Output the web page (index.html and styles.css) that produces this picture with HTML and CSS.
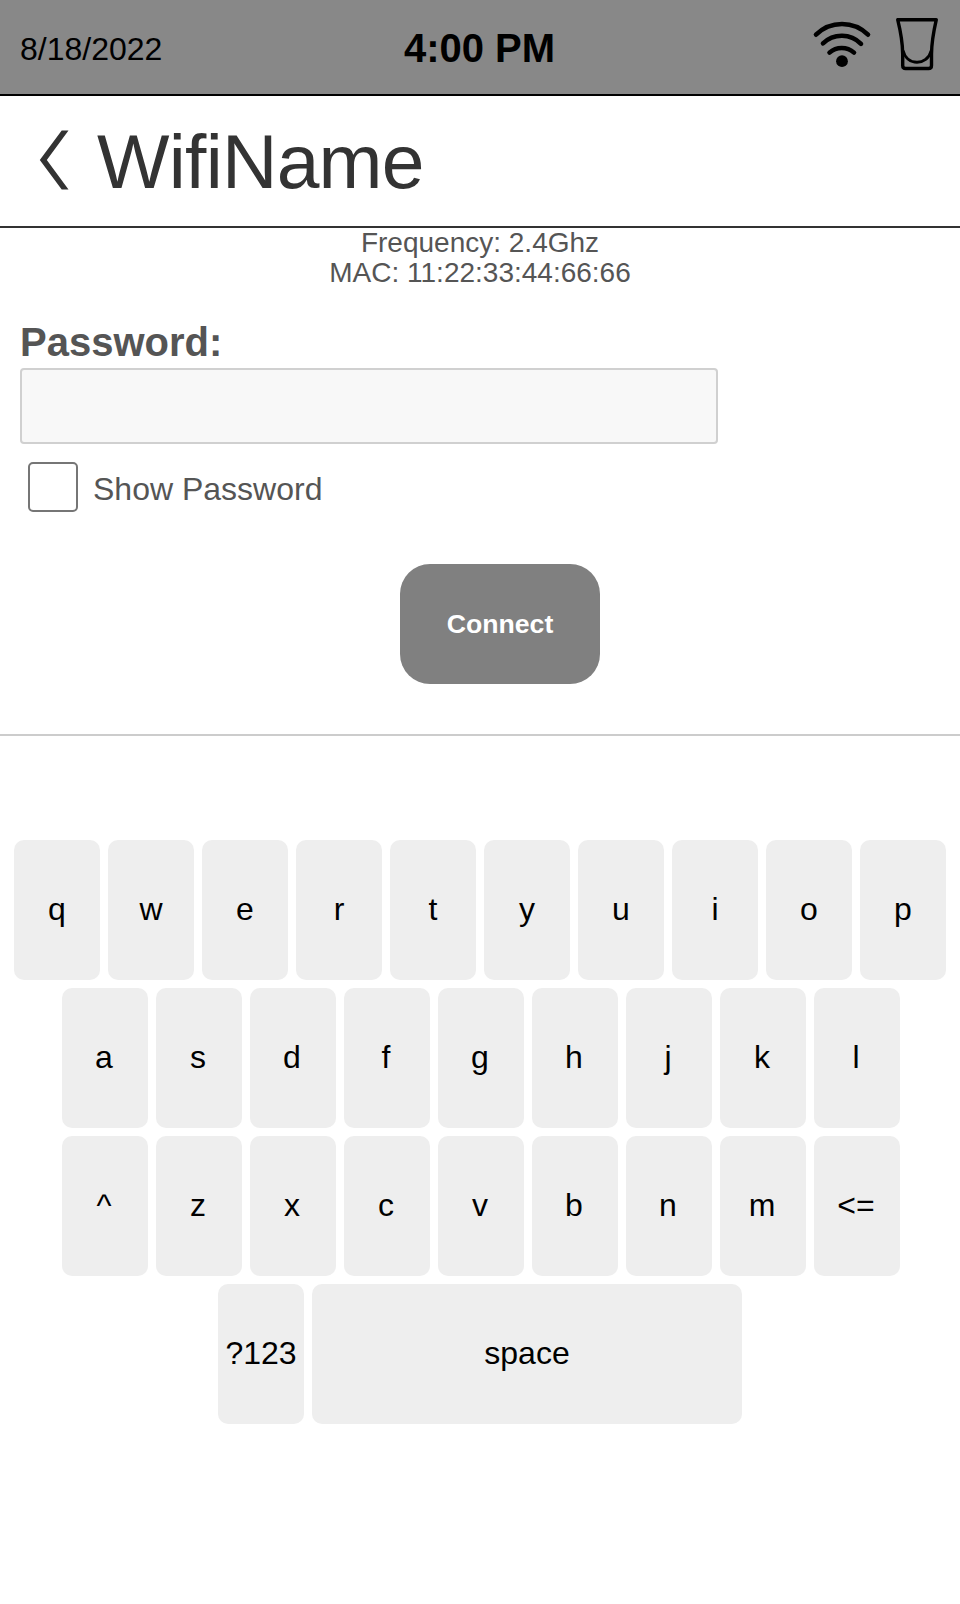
FILE: index.html
```html
<!DOCTYPE html>
<html lang="en">
<head>
<meta charset="utf-8">
<title>WifiName</title>
<link rel="stylesheet" href="styles.css">
</head>
<body>
<header class="status-bar">
  <div class="date">8/18/2022</div>
  <div class="time">4:00 PM</div>
  <div class="status-icons">
    <svg class="wifi" width="60" height="52" viewBox="812 18 60 52" fill="none" stroke="#000" stroke-width="4.6" stroke-linecap="round">
      <path d="M816 35.7A37 37 0 0 1 868 35.7"/>
      <path d="M823 44.4A27 27 0 0 1 861 44.8"/>
      <path d="M829.5 53.6A18.5 18.5 0 0 1 854 53.6"/>
      <circle cx="842" cy="62.2" r="5.9" fill="#000" stroke="none"/>
    </svg>
    <svg class="glass" width="44" height="54" viewBox="895 17 44 54" fill="none" stroke="#000" stroke-width="3.4" stroke-linejoin="round">
      <path d="M897.7 19.7H936.3C933.5 32 931.6 44 931.5 54V65.5Q931.5 68.5 928.5 68.5H905.7Q902.7 68.5 902.7 65.5V54C902.6 44 900.7 32 897.7 19.7Z"/>
      <path stroke-width="3" d="M903 50.5C905 58.5 911 62.2 917 62.2S929.3 58.5 931.3 50.5"/>
    </svg>
  </div>
</header>
<div class="title-bar">
  <svg class="back" width="30" height="60" viewBox="39 130 30 60" fill="#333"><path d="M61.7 130.4H68.5L46.8 160 68.5 189.6H61.7L39.8 160Z"/></svg>
  <h1 class="title">WifiName</h1>
</div>
<main class="network">
  <div class="info">Frequency: 2.4Ghz<br>MAC: 11:22:33:44:66:66</div>
  <label class="password-label" for="password">Password:</label>
  <input class="password-input" id="password" type="password">
  <label class="show-password"><input class="checkbox" type="checkbox"><span>Show Password</span></label>
  <button class="connect">Connect</button>
</main>
<section class="keyboard">
  <div class="row">
    <button class="key">q</button><button class="key">w</button><button class="key">e</button><button class="key">r</button><button class="key">t</button><button class="key">y</button><button class="key">u</button><button class="key">i</button><button class="key">o</button><button class="key">p</button>
  </div>
  <div class="row row-inset">
    <button class="key">a</button><button class="key">s</button><button class="key">d</button><button class="key">f</button><button class="key">g</button><button class="key">h</button><button class="key">j</button><button class="key">k</button><button class="key">l</button>
  </div>
  <div class="row row-inset">
    <button class="key">^</button><button class="key">z</button><button class="key">x</button><button class="key">c</button><button class="key">v</button><button class="key">b</button><button class="key">n</button><button class="key">m</button><button class="key">&lt;=</button>
  </div>
  <div class="row">
    <button class="key">?123</button><button class="key key-space">space</button>
  </div>
</section>
</body>
</html>
```
FILE: styles.css
```css
* { box-sizing: border-box; }
body {
  margin: 0;
  height: 1604px;
  background: #fff;
  color: #555;
  font-family: "Liberation Sans", Arial, sans-serif;
}
button { font-family: inherit; border: 0; }
svg { display: block; }

.status-bar {
  display: grid;
  grid-template-columns: 1fr auto 1fr;
  align-items: center;
  height: 96px;
  padding: 0 21px 0 20px;
  background: #888;
  border-bottom: 2px solid #000;
  color: #000;
}
.date { font-size: 32px; line-height: 36px; padding-top: 4px; }
.time { font-size: 40px; font-weight: bold; line-height: 46px; padding-top: 2px; }
.status-icons { display: flex; justify-content: flex-end; gap: 23px; padding-bottom: 6px; }

.title-bar {
  display: flex;
  align-items: center;
  gap: 28px;
  height: 132px;
  padding-left: 39px;
  border-bottom: 2px solid #333;
  color: #333;
}
.back { margin-bottom: 2px; }
.title { margin: 0; font-size: 76.8px; font-weight: normal; line-height: 88px; letter-spacing: -0.75px; }

.network {
  display: flex;
  flex-direction: column;
  align-items: flex-start;
  height: 508px;
  padding: 0 20px;
  border-bottom: 2px solid #ccc;
}
.info { align-self: center; font-size: 28px; line-height: 30px; text-align: center; }
.password-label { margin-top: 31px; font-size: 40px; font-weight: bold; line-height: 46px; }
.password-input {
  width: 698px;
  height: 76px;
  margin-top: 3px;
  background: #f8f8f8;
  border: 2px solid #d0d0d0;
  border-radius: 4px;
}
.show-password {
  display: flex;
  align-items: center;
  gap: 15px;
  margin: 18px 0 0 8px;
  font-size: 32px;
  line-height: 36px;
}
.show-password span { padding-top: 4px; }
.checkbox {
  appearance: none;
  width: 50px;
  height: 50px;
  margin: 0;
  background: #fff;
  border: 2px solid #767676;
  border-radius: 5px;
}
.connect {
  width: 200px;
  height: 120px;
  margin: 52px 0 0 380px;
  background: #808080;
  border-radius: 30px;
  color: #fff;
  font-size: 26.667px;
  font-weight: bold;
}

.keyboard { display: flex; flex-direction: column; gap: 8px; padding-top: 104px; }
.row { display: flex; justify-content: center; gap: 8px; }
.row-inset { padding-left: 2px; }
.key {
  width: 86px;
  height: 140px;
  padding: 0 0 2px;
  background: #eee;
  border-radius: 10px;
  color: #000;
  font-size: 32px;
}
.row-inset .key { padding-right: 2px; }
.key-space { width: 430px; }
```
